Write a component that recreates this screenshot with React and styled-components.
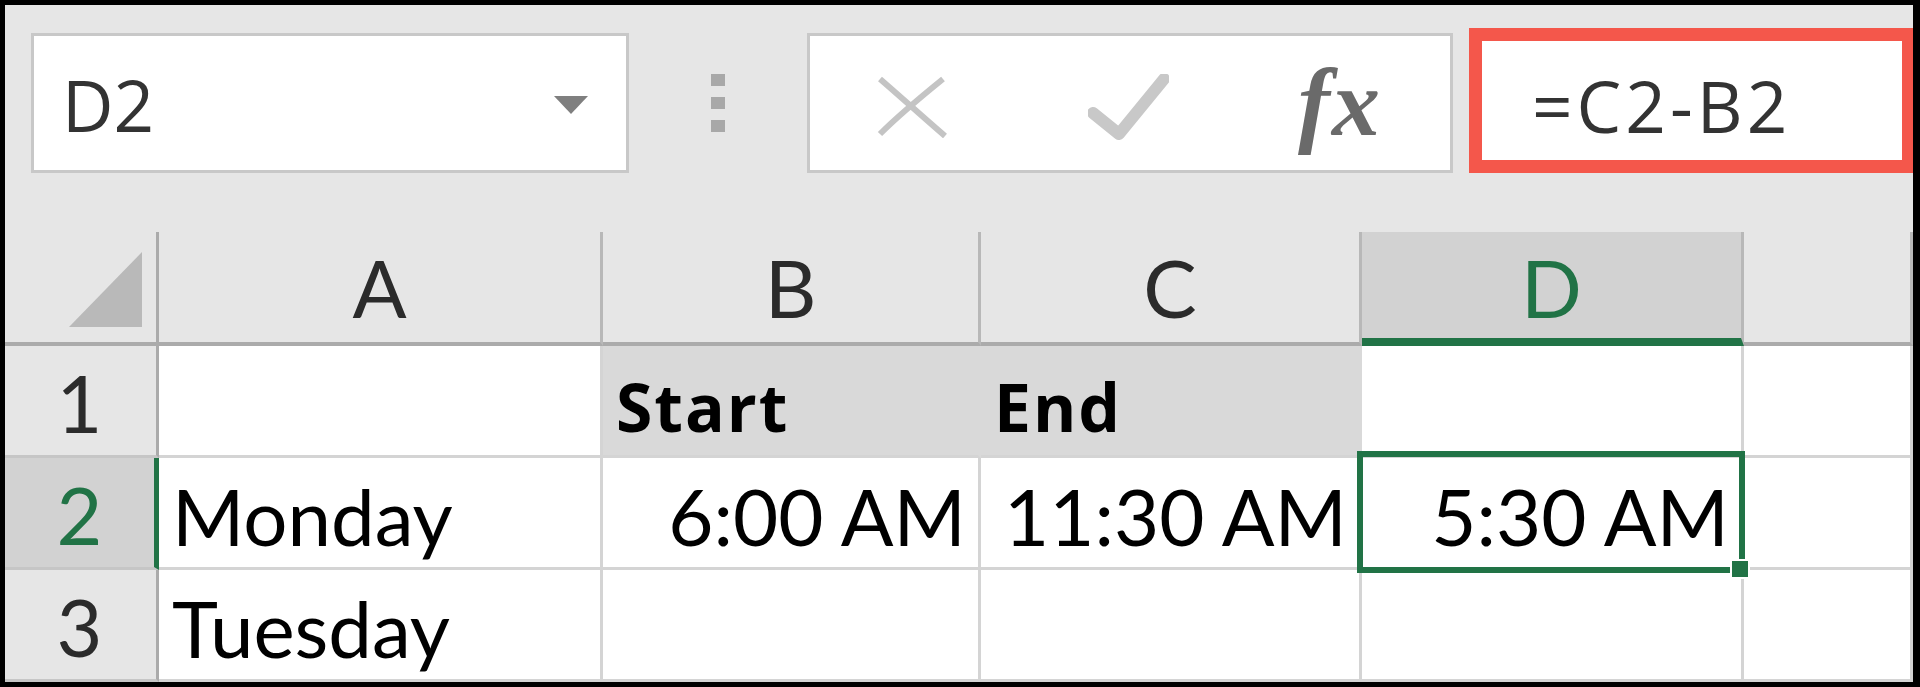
import React from "react";
import styled, { createGlobalStyle } from "styled-components";

const GREEN = "#217346";
const GRAY = "#e6e6e6";
const SELECTED_GRAY = "#d2d2d2";
const FILL_GRAY = "#d9d9d9";
const GRID_LINE = "#d4d4d4";
const HEAD_LINE = "#ababab";

const GlobalStyle = createGlobalStyle`
  html, body {
    margin: 0;
    padding: 0;
    background: #000;
  }
  body {
    font-family: "Lato", "Liberation Sans", sans-serif;
  }
`;

const Frame = styled.div`
  width: 1920px;
  height: 687px;
  box-sizing: border-box;
  border-style: solid;
  border-color: #000;
  border-width: 5px 7px 5px 5px;
  background: ${GRAY};
  display: flex;
  flex-direction: column;
  overflow: hidden;
`;

// formula bar
const FormulaBar = styled.div`
  display: flex;
  align-items: flex-end;
  height: 227px;
  flex-shrink: 0;
  box-sizing: border-box;
  padding: 0 0 59px 26px;
`;

const NameBox = styled.div`
  width: 598px;
  height: 140px;
  box-sizing: border-box;
  background: #fff;
  border: 3px solid #c8c8c8;
  display: flex;
  align-items: center;
  justify-content: space-between;
  padding: 3px 38px 0 28px;
`;

const BarText = styled.span`
  font-family: "Open Sans", "Noto Sans", sans-serif;
  font-size: 71px;
  line-height: 1;
  letter-spacing: ${(p) => p.$spacing || 0}px;
  color: #333;
`;

const Grip = styled.div`
  height: 140px;
  margin: 0 82px;
  display: flex;
  flex-direction: column;
  justify-content: center;
  gap: 11px;
`;

const GripDot = styled.div`
  width: 14px;
  height: 12px;
  background: #a8a8a8;
`;

const FxBox = styled.div`
  width: 646px;
  height: 140px;
  box-sizing: border-box;
  background: #fff;
  border: 3px solid #c8c8c8;
  display: flex;
  align-items: center;
  padding-left: 66px;
`;

const IconSlot = styled.div`
  display: flex;
  margin-left: ${(p) => p.$gap || 0}px;
  margin-top: ${(p) => p.$down || 0}px;
`;

const FxLabel = styled.span`
  font-family: "Liberation Serif", "DejaVu Serif", serif;
  font-style: italic;
  font-weight: 700;
  font-size: 96px;
  line-height: 1;
  letter-spacing: 2px;
  color: #6a6a6a;
`;

const FormulaInput = styled.div`
  flex: 1;
  height: 145px;
  margin-left: 16px;
  box-sizing: border-box;
  background: #fff;
  border: 13px solid #f4574b;
  border-right-width: 11px;
  display: flex;
  align-items: center;
  padding: 10px 0 0 50px;
`;

// sheet
const Sheet = styled.div`
  flex: 1;
  display: grid;
  grid-template-columns: 154px 444px 378px 381px 382px 1fr;
  grid-template-rows: 114px 112px 112px 112px;
  background: #fff;
`;

const Corner = styled.div`
  background: ${GRAY};
  border-right: 3px solid ${HEAD_LINE};
  border-bottom: 4px solid ${HEAD_LINE};
  display: flex;
  align-items: flex-end;
  justify-content: flex-end;
  padding: 0 14px 15px 0;
`;

const CornerTriangle = styled.div`
  width: 73px;
  height: 75px;
  background: #b9b9b9;
  clip-path: polygon(100% 0, 100% 100%, 0 100%);
`;

const ColHead = styled.div`
  background: ${(p) => (p.$active ? SELECTED_GRAY : GRAY)};
  border-right: 3px solid #b8b8b8;
  border-bottom: ${(p) => (p.$active ? `8px solid ${GREEN}` : `4px solid ${HEAD_LINE}`)};
  padding-top: ${(p) => (p.$active ? 4 : 0)}px;
  display: flex;
  align-items: center;
  justify-content: center;
  font-size: 80px;
  line-height: 1;
  color: ${(p) => (p.$active ? GREEN : "#2b2b2b")};
`;

const RowHead = styled.div`
  background: ${(p) => (p.$active ? SELECTED_GRAY : GRAY)};
  border-right: ${(p) => (p.$active ? `5px solid ${GREEN}` : `3px solid ${HEAD_LINE}`)};
  border-bottom: 3px solid #c6c6c6;
  display: flex;
  align-items: center;
  justify-content: center;
  padding: 4px ${(p) => (p.$active ? 0 : 2)}px 0 0;
  font-size: 79px;
  line-height: 1;
  color: ${(p) => (p.$active ? GREEN : "#2b2b2b")};
`;

const Cell = styled.div`
  position: relative;
  background: ${(p) => (p.$fill ? FILL_GRAY : "#fff")};
  border-right: 3px solid ${(p) => (p.$fill ? FILL_GRAY : GRID_LINE)};
  border-bottom: 3px solid ${GRID_LINE};
  display: flex;
  align-items: center;
  justify-content: ${(p) => (p.$right ? "flex-end" : "flex-start")};
  padding: 6px 12px 0 13px;
  font-size: 78px;
  line-height: 1;
  color: #000;
  white-space: nowrap;
`;

const Bold = styled.span`
  font-family: "Open Sans", "Noto Sans", sans-serif;
  font-weight: 700;
  font-size: 66px;
  letter-spacing: 2px;
  padding-top: 4px;
`;

const Selection = styled.div`
  position: absolute;
  left: -5px;
  top: -7px;
  right: -4px;
  bottom: -6px;
  border: 6px solid ${GREEN};
  z-index: 2;
  pointer-events: none;
`;

const FillHandle = styled.div`
  position: absolute;
  right: -11px;
  bottom: -12px;
  width: 16px;
  height: 16px;
  background: ${GREEN};
  border: 2px solid #fff;
`;

const CancelIcon = () => (
  <svg width="72" height="62" viewBox="0 0 72 62">
    <path d="M4 3 C 26 22, 48 42, 69 60" stroke="#c4c4c4" strokeWidth="6" fill="none" />
    <path d="M67 3 C 46 20, 22 40, 4 58" stroke="#c4c4c4" strokeWidth="6" fill="none" />
  </svg>
);

const EnterIcon = () => (
  <svg width="81" height="66" viewBox="0 0 81 66">
    <polyline
      points="5,39 31,60 76,5"
      stroke="#c8c8c8"
      strokeWidth="12"
      strokeLinecap="round"
      strokeLinejoin="round"
      fill="none"
    />
  </svg>
);

const DropArrow = () => (
  <svg width="34" height="18" viewBox="0 0 34 18">
    <polygon points="0,0 34,0 17,18" fill="#7f7f7f" />
  </svg>
);

const columns = ["A", "B", "C", "D", ""];

const rows = [
  [
    { text: "" },
    { text: "Start", bold: true, fill: true },
    { text: "End", bold: true, fill: true },
    { text: "" },
    { text: "" },
  ],
  [
    { text: "Monday" },
    { text: "6:00 AM", right: true },
    { text: "11:30 AM", right: true },
    { text: "5:30 AM", right: true, selected: true },
    { text: "" },
  ],
  [{ text: "Tuesday" }, { text: "" }, { text: "" }, { text: "" }, { text: "" }],
];

export default function App() {
  return (
    <>
      <GlobalStyle />
      <Frame>
        <FormulaBar>
          <NameBox>
            <BarText>D2</BarText>
            <DropArrow />
          </NameBox>
          <Grip>
            <GripDot />
            <GripDot />
            <GripDot />
          </Grip>
          <FxBox>
            <IconSlot $down={7}>
              <CancelIcon />
            </IconSlot>
            <IconSlot $gap={140} $down={8}>
              <EnterIcon />
            </IconSlot>
            <IconSlot $gap={129}>
              <FxLabel>fx</FxLabel>
            </IconSlot>
          </FxBox>
          <FormulaInput>
            <BarText $spacing={4}>=C2-B2</BarText>
          </FormulaInput>
        </FormulaBar>

        <Sheet>
          <Corner>
            <CornerTriangle />
          </Corner>
          {columns.map((c, i) => (
            <ColHead key={i} $active={c === "D"}>
              {c}
            </ColHead>
          ))}
          {rows.map((row, r) => (
            <React.Fragment key={r}>
              <RowHead $active={r === 1}>{r + 1}</RowHead>
              {row.map((cell, c) => (
                <Cell key={c} $fill={cell.fill} $right={cell.right}>
                  {cell.bold ? <Bold>{cell.text}</Bold> : cell.text}
                  {cell.selected && (
                    <Selection>
                      <FillHandle />
                    </Selection>
                  )}
                </Cell>
              ))}
            </React.Fragment>
          ))}
        </Sheet>
      </Frame>
    </>
  );
}
